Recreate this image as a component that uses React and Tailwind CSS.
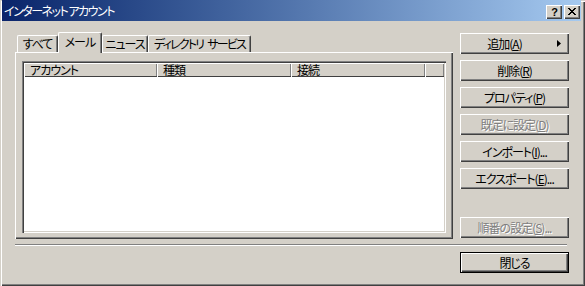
import clsx from "clsx";

const raised = "shadow-[inset_1px_1px_0_#fff,inset_-1px_-1px_0_#404040,inset_-2px_-2px_0_#808080]";

const Key = ({ k }) => <span className="underline underline-offset-[1px]">{k}</span>;

const Btn = ({ children, disabled, def, arrow }) => (
  <button
    type="button"
    className={clsx(
      "relative flex h-[21px] w-[109px] shrink-0 items-center justify-center whitespace-nowrap bg-[#d4d0c8] text-[12px] leading-none tracking-[-1px]",
      raised,
      def && "border border-black",
      arrow && "pr-[20px]",
      disabled ? "text-[#808080] [text-shadow:1px_1px_0_#fff]" : "text-black"
    )}
  >
    <span>{children}</span>
    {arrow && (
      <svg className="absolute right-[8px] top-[7px]" width="4" height="7" viewBox="0 0 4 7">
        <path d="M0 0L4 3.5L0 7Z" fill="#000" />
      </svg>
    )}
  </button>
);

const Tab = ({ children, w, active, tight }) => (
  <div
    className={clsx(
      "flex items-center justify-center whitespace-nowrap rounded-t-[2px] border-l border-t border-r border-white border-r-[#404040] bg-[#d4d0c8] text-[12px] leading-none text-black shadow-[inset_-1px_0_0_#808080]",
      tight ? "tracking-[-1.8px]" : "tracking-[-1px]",
      w,
      active ? "relative z-10 -mb-[1px] h-[21px] pb-[2px]" : "h-[17px]"
    )}
  >
    {children}
  </div>
);

const HeadCell = ({ label, w }) => (
  <div
    className={clsx(
      "flex h-full items-center pl-[6px] text-[12px] leading-none tracking-[-1px] text-black shadow-[inset_1px_1px_0_#fff,inset_0_-1px_0_#404040,inset_-1px_0_0_#808080]",
      w
    )}
  >
    {label}
  </div>
);

export default function App() {
  return (
    <div className="relative h-[286px] w-[585px] overflow-hidden bg-[#d4d0c8] shadow-[inset_1px_1px_0_#d4d0c8,inset_2px_2px_0_#fff,inset_-1px_-1px_0_#404040,inset_-2px_-2px_0_#808080] [font-family:'Noto_Sans_CJK_JP',sans-serif] [font-feature-settings:'palt']">
      {/* title bar */}
      <div className="ml-[2px] mr-[4px] flex h-[21px] bg-linear-to-r from-[#0a246a] to-[#a6caf0] pl-[2px] pr-[1px]">
        <div className="flex-1 whitespace-nowrap pt-[5px] text-[12px] leading-none tracking-[-1.5px] text-white">インターネット アカウント</div>
        <div className="flex gap-[2px] self-end pb-[2px]">
          <div className={clsx("flex h-[14px] w-[16px] items-center justify-center bg-[#d4d0c8] pl-[1px] text-[11px] font-bold leading-none text-black [font-family:'Liberation_Sans',sans-serif]", raised)}>
            ?
          </div>
          <div className={clsx("flex h-[14px] w-[16px] items-center justify-center bg-[#d4d0c8] pb-[1px]", raised)}>
            <svg width="8" height="7" viewBox="0 0 8 7" shapeRendering="crispEdges">
              <path d="M0 0h2l2 2.5l2-2.5h2l-3 3.5l3 3.5h-2l-2-2.5l-2 2.5h-2l3-3.5z" fill="#000" />
            </svg>
          </div>
        </div>
      </div>

      {/* body */}
      <div className="flex pl-[15px] pt-[11px]">
        <div className="w-[438px]">
          <div className="flex h-[20px] items-end pl-[2px]">
            <Tab w="w-[41px]">すべて</Tab>
            <Tab w="w-[44px]" active>メール</Tab>
            <Tab w="w-[46px]">ニュース</Tab>
            <Tab w="w-[103px]" tight>
              ディレクトリ<span className="w-[4px] shrink-0" />サービス
            </Tab>
          </div>
          <div className={clsx("h-[187px] px-[7px] pb-[6px] pt-[9px]", raised)}>
            <div className="h-full bg-white p-[2px] shadow-[inset_1px_1px_0_#808080,inset_2px_2px_0_#404040,inset_-1px_-1px_0_#fff,inset_-2px_-2px_0_#d4d0c8]">
              <div className="flex h-[14px] bg-[#d4d0c8]">
                <HeadCell label="アカウント" w="w-[133px]" />
                <HeadCell label="種類" w="w-[134px]" />
                <HeadCell label="接続" w="w-[134px]" />
                <HeadCell label="" w="flex-1" />
              </div>
            </div>
          </div>
        </div>

        <div className="ml-[7px] flex h-[207px] flex-col gap-[6px] pb-[1px] pt-[1px]">
          <Btn arrow>追加(<Key k="A" />)</Btn>
          <Btn>削除(<Key k="R" />)</Btn>
          <Btn>プロパティ(<Key k="P" />)</Btn>
          <Btn disabled>既定に設定(<Key k="D" />)</Btn>
          <Btn>インポート(<Key k="I" />)...</Btn>
          <Btn>エクスポート(<Key k="E" />)...</Btn>
          <div className="mt-auto">
            <Btn disabled>順番の設定(<Key k="S" />)...</Btn>
          </div>
        </div>
      </div>

      {/* separator */}
      <div className="ml-[15px] mt-[5px] h-[2px] w-[552px] border-b border-t border-b-white border-t-[#808080]" />

      <div className="mt-[6px] flex justify-end pr-[16px]">
        <Btn def>閉じる</Btn>
      </div>
    </div>
  );
}
